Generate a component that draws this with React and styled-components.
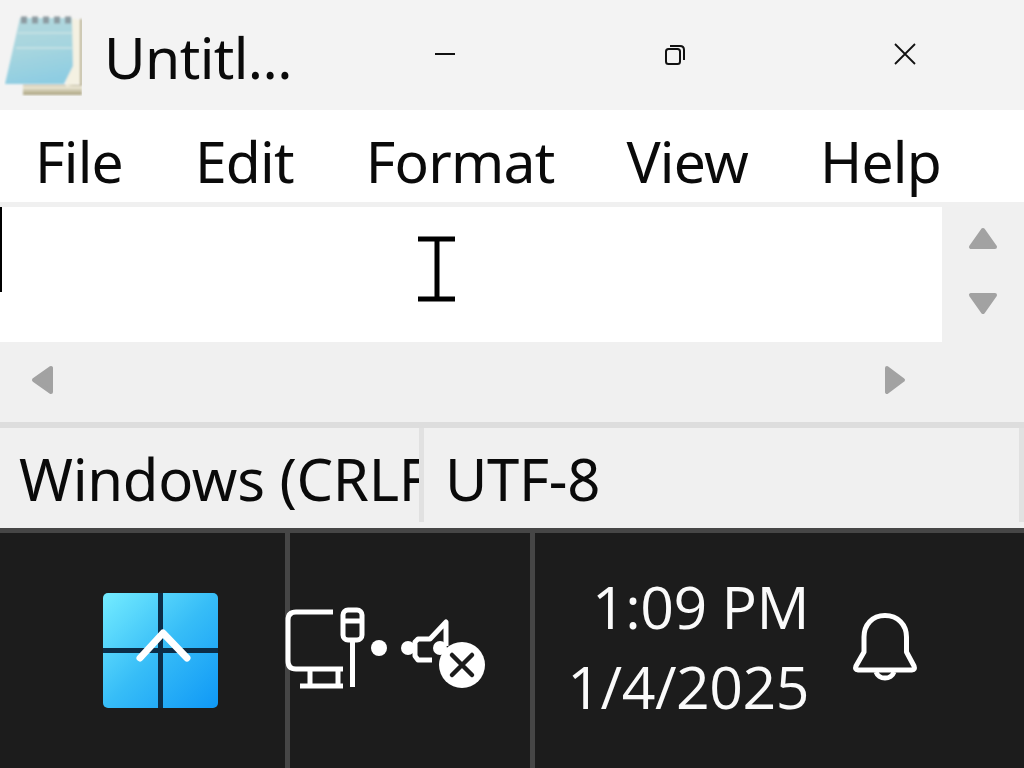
import React from "react";
import styled, { createGlobalStyle } from "styled-components";

const GlobalStyle = createGlobalStyle`
  html, body {
    margin: 0;
    padding: 0;
    background: rgb(240, 240, 240);
  }

  body {
    font-family: "Noto Sans", "Open Sans", "Liberation Sans", sans-serif;
  }
`;

const Screen = styled.div`
  width: 1024px;
  height: 768px;
  display: flex;
  flex-direction: column;
  overflow: hidden;
`;

const TitleBar = styled.header`
  height: 110px;
  display: flex;
  align-items: center;
  padding-right: 4px;
  background: rgb(243, 243, 243);
`;

const TitleGroup = styled.div`
  flex: 1;
  display: flex;
  align-items: center;
  gap: 22px;
  padding-left: 4px;
`;

const Title = styled.span`
  margin-top: 4px;
  font-size: 57px;
  letter-spacing: -0.6px;
  line-height: 1;
  color: rgb(10, 10, 10);
`;

const WindowButton = styled.div`
  width: 230px;
  display: flex;
  justify-content: center;
  margin-bottom: 2px;
`;

const MenuBar = styled.nav`
  height: 92px;
  box-sizing: border-box;
  display: flex;
  align-items: center;
  gap: 72px;
  padding: 10px 0 0 35px;
  background: rgb(255, 255, 255);
`;

const MenuItem = styled.span`
  font-size: 57px;
  letter-spacing: -0.8px;
  line-height: 1;
  color: rgb(10, 10, 10);
`;

const EditorRow = styled.div`
  height: 135px;
  margin-top: 5px;
  display: flex;
`;

const Editor = styled.div`
  position: relative;
  flex: 1;
  background: rgb(255, 255, 255);
`;

const Caret = styled.div`
  width: 2px;
  height: 85px;
  background: rgb(0, 0, 0);
`;

const MouseCursor = styled.svg`
  position: absolute;
  left: 418px;
  top: 29px;
`;

const VerticalScroll = styled.div`
  width: 82px;
  display: flex;
  flex-direction: column;
  align-items: center;
  gap: 35px;
  padding-top: 18px;
  box-sizing: border-box;
`;

const HorizontalScroll = styled.div`
  height: 80px;
  display: flex;
  align-items: center;
  justify-content: space-between;
  padding: 0 115px 4px 29px;
  box-sizing: border-box;
`;

const StatusBar = styled.footer`
  height: 106px;
  display: flex;
  box-sizing: border-box;
  border-top: 6px solid rgb(221, 221, 221);
`;

const StatusCell = styled.div`
  width: ${(props) => props.width}px;
  height: 94px;
  box-sizing: border-box;
  display: flex;
  align-items: center;
  padding: 6px 0 0 ${(props) => props.inset}px;
  overflow: hidden;
  white-space: nowrap;
  border-right: 5px solid rgb(225, 225, 225);
  font-size: 58px;
  letter-spacing: -0.3px;
  color: rgb(10, 10, 10);
`;

const Taskbar = styled.div`
  flex: 1;
  display: flex;
  background: rgb(28, 28, 28);
  border-top: 5px solid rgb(70, 70, 70);
`;

const TaskSection = styled.div`
  width: ${(props) => props.width}px;
  flex-shrink: 0;
  display: flex;
  align-items: center;
  box-sizing: border-box;
  border-right: 5px solid rgb(70, 70, 70);
`;

const StartSection = styled(TaskSection)`
  padding-left: 103px;
`;

const TrayIcons = styled.svg`
  margin: 0 0 6px -10px;
  flex-shrink: 0;
`;

const ClockSection = styled.div`
  flex: 1;
  display: flex;
  align-items: center;
  justify-content: flex-end;
  gap: 42px;
  padding-right: 105px;
`;

const Clock = styled.div`
  display: flex;
  flex-direction: column;
  align-items: flex-end;
  margin-bottom: 10px;
  font-family: "Open Sans", "Noto Sans", sans-serif;
  font-weight: 400;
  font-size: 59px;
  line-height: 80px;
  letter-spacing: -0.5px;
  color: rgb(250, 250, 250);
`;

const BellSvg = styled.svg`
  margin-bottom: 5px;
`;

const NotepadIcon = () => (
  <svg width="78" height="82" viewBox="0 0 78 82">
    <defs>
      <linearGradient id="page" x1="0.2" y1="0" x2="0.4" y2="1">
        <stop offset="0" stopColor="#b3d8de" />
        <stop offset="0.5" stopColor="#a6d5df" />
        <stop offset="1" stopColor="#8ecde2" />
      </linearGradient>
      <linearGradient id="backing" x1="0" y1="0" x2="0" y2="1">
        <stop offset="0" stopColor="#f5f1e0" />
        <stop offset="1" stopColor="#a8a07c" />
      </linearGradient>
      <filter id="soft">
        <feGaussianBlur stdDeviation="1.1" />
      </filter>
    </defs>
    <g filter="url(#soft)">
      <path d="M19 80 H78 V5 H76 V71 H19 Z" fill="#b0a885" />
      <path d="M19 72 H78 V81 H19 Z" fill="url(#backing)" />
      <path d="M62 72 L76 70 L76 6 L67 4 Z" fill="#f4f1e2" />
      <path d="M16 4 L68 4 L69 52 L60 70 L1 70 Z" fill="url(#page)" />
      <path d="M14 19 L68 19 M12 34 L68 34" stroke="#c2e0e3" strokeWidth="2" />
      <path d="M17 6 H70" stroke="#8c9aa0" strokeWidth="7" strokeDasharray="6 5" />
    </g>
  </svg>
);

const MinimizeIcon = () => (
  <svg width="22" height="22" viewBox="0 0 22 22">
    <path d="M1 11 H21" stroke="#111" strokeWidth="2" fill="none" />
  </svg>
);

const RestoreIcon = () => (
  <svg width="20" height="21" viewBox="0 0 20 21" fill="none" stroke="#111" strokeWidth="2">
    <rect x="1" y="5" width="14" height="15" rx="2.5" />
    <path d="M5 2 H15 Q19 2 19 6 V16" />
  </svg>
);

const CloseIcon = () => (
  <svg width="22" height="22" viewBox="0 0 22 22">
    <path d="M1 1 L21 21 M21 1 L1 21" stroke="#111" strokeWidth="1.8" fill="none" />
  </svg>
);

const Arrow = ({ d }) => (
  <svg width="30" height="30" viewBox="0 0 30 30">
    <path d={d} fill="#a2a2a2" stroke="#a2a2a2" strokeWidth="4" strokeLinejoin="round" />
  </svg>
);

const StartIcon = () => (
  <svg width="115" height="115" viewBox="0 0 115 115">
    <defs>
      <linearGradient id="tiles" x1="0" y1="0" x2="1" y2="1">
        <stop offset="0" stopColor="#74ecff" />
        <stop offset="0.5" stopColor="#37bdf7" />
        <stop offset="1" stopColor="#0f98f6" />
      </linearGradient>
    </defs>
    <rect width="115" height="115" rx="5" fill="url(#tiles)" />
    <path d="M55 0 H60 V115 H55 Z M0 55 H115 V60 H0 Z" fill="#0c2d47" />
    <path d="M37 65 L60 40 L84 65" stroke="#fff" strokeWidth="7" strokeLinecap="round" strokeLinejoin="round" fill="none" />
  </svg>
);

const BellIcon = () => (
  <BellSvg width="68" height="76" viewBox="850 610 68 76" fill="none" stroke="#fff" strokeWidth="5" strokeLinejoin="round">
    <path d="M884 615.5 C871 615.5 863 625 863 637 V652 L855 666 Q853.5 670 857 670 H911 Q914.5 670 913 666 L905.5 652 V637 C905.5 625 897 615.5 884 615.5 Z" />
    <path d="M875 672 a9.5 9 0 0 0 18 0" />
  </BellSvg>
);

const App = () => (
  <Screen>
    <GlobalStyle />
    <TitleBar>
      <TitleGroup>
        <NotepadIcon />
        <Title>Untitl...</Title>
      </TitleGroup>
      <WindowButton><MinimizeIcon /></WindowButton>
      <WindowButton><RestoreIcon /></WindowButton>
      <WindowButton><CloseIcon /></WindowButton>
    </TitleBar>
    <MenuBar>
      {["File", "Edit", "Format", "View", "Help"].map((item) => (
        <MenuItem key={item}>{item}</MenuItem>
      ))}
    </MenuBar>
    <EditorRow>
      <Editor>
        <Caret />
        <MouseCursor width="38" height="66" viewBox="0 0 38 66" fill="none" stroke="#000" strokeWidth="5">
          <path d="M0 3 H37 M0 63 H37 M19 3 V63" />
        </MouseCursor>
      </Editor>
      <VerticalScroll>
        <Arrow d="M15 5 L3 22 H27 Z" />
        <Arrow d="M3 5 H27 L15 22 Z" />
      </VerticalScroll>
    </EditorRow>
    <HorizontalScroll>
      <Arrow d="M5 15 L22 3 V27 Z" />
      <Arrow d="M8 3 L24 15 L8 27 Z" />
    </HorizontalScroll>
    <StatusBar>
      <StatusCell width={424} inset={19}>Windows (CRLF</StatusCell>
      <StatusCell width={600} inset={21}>UTF-8</StatusCell>
    </StatusBar>
    <Taskbar>
      <StartSection width={290}>
        <StartIcon />
      </StartSection>
      <TaskSection width={245}>
        <TrayIcons width="210" height="95" viewBox="280 600 210 95" fill="none" stroke="#fff" strokeWidth="5" strokeLinecap="butt">
          <path d="M333 612 H296 Q288 612 288 620 V661 Q288 669 296 669 H343" />
          <path d="M310 669 V686 M338 669 V686 M300 686 H343" />
          <rect x="343" y="610" width="19" height="30" rx="5" />
          <path d="M343 621 H362 M352.5 640 V687" />
          <circle cx="379" cy="648" r="8" fill="#fff" stroke="none" />
          <circle cx="408" cy="648" r="7" fill="#fff" stroke="none" />
          <path d="M432 660 H418 L415 656 V642 L418 639 H430 L446 622 V646" strokeLinejoin="round" />
          <circle cx="440" cy="648" r="7" fill="#fff" stroke="none" />
          <circle cx="462" cy="665" r="23" fill="#fff" stroke="none" />
          <path d="M452 655 L472 675 M472 655 L452 675" stroke="#1c1c1c" strokeWidth="4.5" strokeLinecap="round" />
        </TrayIcons>
      </TaskSection>
      <ClockSection>
        <Clock>
          <span>1:09 PM</span>
          <span>1/4/2025</span>
        </Clock>
        <BellIcon />
      </ClockSection>
    </Taskbar>
  </Screen>
);

export default App;
